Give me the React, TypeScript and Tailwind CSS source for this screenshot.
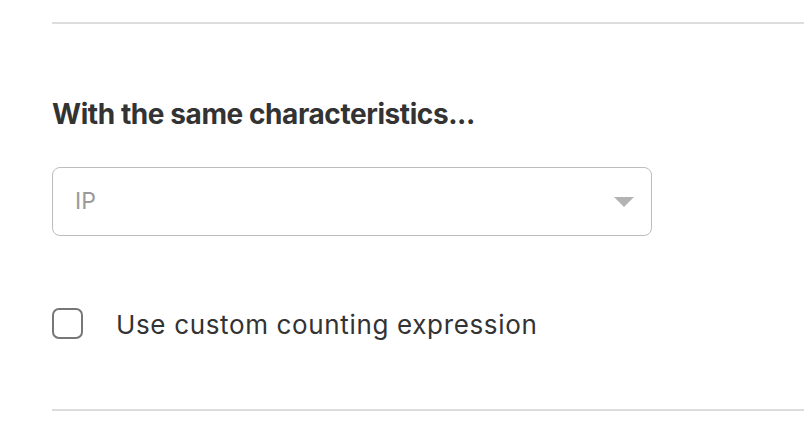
export default function App() {
  return (
    <div className="w-[804px] h-[430px] bg-white overflow-hidden font-['Inter',sans-serif]">
      <div className="ml-[52px] pt-[22px]">
        <div className="h-[2px] bg-[#dcdcdc]" />
        <h2 className="mt-[73px] text-[28px] leading-[34px] font-bold tracking-[-0.015em] text-[#333333]">
          With the same characteristics...
        </h2>
        <div className="mt-[36px] w-[600px] h-[69px] rounded-[8px] border-[1.5px] border-[#bdbdbd] flex items-center justify-between pl-[22px] pr-[17px]">
          <span className="text-[23px] text-[#9a9a9a]">IP</span>
          <svg width="20" height="10" viewBox="0 0 20 10">
            <path d="M0 0 L20 0 L10 10 Z" fill="#b3b3b3" />
          </svg>
        </div>
        <label className="mt-[70px] flex items-center gap-[33px]">
          <span className="w-[31px] h-[31px] rounded-[7px] border-2 border-[#777777]" />
          <span className="mt-[3px] text-[26px] leading-[32px] text-[#333333] tracking-[0.025em]">Use custom counting expression</span>
        </label>
        <div className="mt-[68px] h-[2px] bg-[#dcdcdc]" />
      </div>
    </div>
  )
}
